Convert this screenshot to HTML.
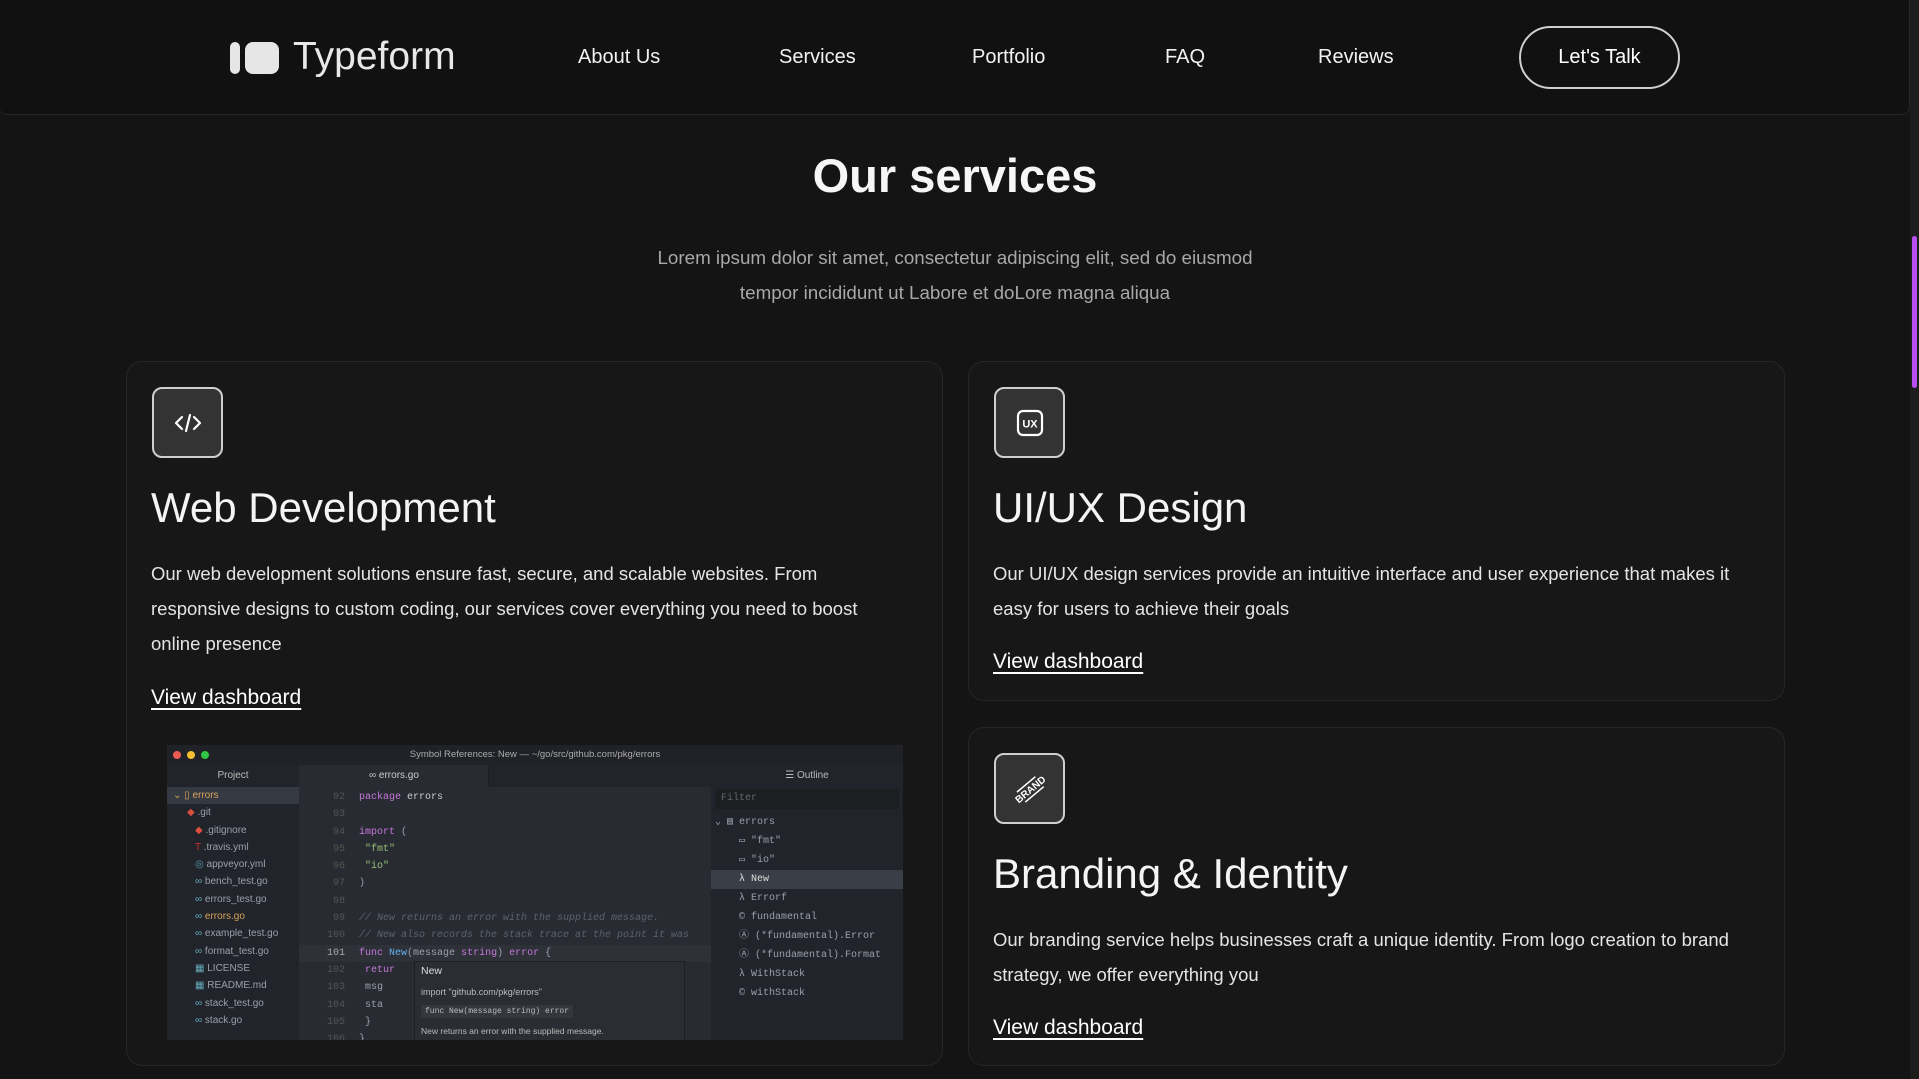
<!DOCTYPE html>
<html><head><meta charset="utf-8"><style>
*{margin:0;padding:0;box-sizing:border-box}
body{width:1919px;height:1079px;overflow:hidden;background:#141414;font-family:"Liberation Sans",sans-serif;color:#fff;position:relative}
.nav{position:absolute;left:0;top:0;width:1910px;height:115px;background:#111;border:1px solid #262626;border-top:none;border-left:none;border-radius:0 0 8px 8px}
.logo{position:absolute;left:230px;top:39px;display:flex;align-items:center}
.logo .a{width:10px;height:32px;background:#e6e6e6;border-radius:5px;margin-right:5px}
.logo .b{width:34px;height:32px;background:#e6e6e6;border-radius:8px}
.logo span{font-size:39px;color:#e8e8e8;margin-left:14px;letter-spacing:0px;line-height:39px;margin-top:-2px}
.nl{position:absolute;top:46px;font-size:20px;color:#f2f2f2}
.btn{position:absolute;left:1519px;top:26px;width:161px;height:63px;border:2px solid #cfcfcf;border-radius:32px;font-size:20px;text-align:center;line-height:59px;color:#fff}
.sb{position:absolute;left:1910px;top:0;width:9px;height:1079px;background:#1c1c1c}
.th{position:absolute;left:1912px;top:236px;width:5px;height:152px;background:#b84ff0;border-radius:3px}
h1{position:absolute;left:0;width:1910px;text-align:center;top:148px;font-size:47px;font-weight:bold;color:#f6f6f6}
.sub{position:absolute;left:0;width:1910px;text-align:center;top:240px;font-size:18.8px;line-height:35px;color:#a8a8a8}
.card{position:absolute;background:#171717;border:1px solid #262626;border-radius:16px}
.ic{position:absolute;left:25px;top:25px;width:71px;height:71px;background:#333;border:2px solid #cfcfcf;border-radius:10px;display:flex;align-items:center;justify-content:center}
.card h2{position:absolute;left:24px;top:122px;font-size:42px;font-weight:normal;color:#f4f4f4;white-space:nowrap}
.card p{position:absolute;left:24px;top:194px;font-size:18.5px;line-height:35px;color:#e4e4e4}
.card a{position:absolute;left:24px;font-size:21px;color:#fff;text-decoration:underline;text-underline-offset:4px}
.ed{position:absolute;left:40px;top:383px;width:736px;height:295px;background:#282b31;overflow:hidden;font-size:10px;color:#9aa0aa}
.tb{height:20px;background:#202227;text-align:center;line-height:20px;font-size:9.5px;color:#aaa;position:relative}
.dot{position:absolute;top:6px;width:8px;height:8px;border-radius:50%}
.pj{position:absolute;left:0;top:20px;width:132px;height:275px;background:#21242a}
.ol{position:absolute;left:544px;top:20px;width:192px;height:275px;background:#21242a}
.row{height:17.3px;line-height:17.3px;white-space:nowrap}
.mono{font-family:"Liberation Mono",monospace}
</style></head><body>
<div class="nav">
<div class="logo"><div class="a"></div><div class="b"></div><span>Typeform</span></div>
<div class="nl" style="left:578px">About Us</div>
<div class="nl" style="left:779px">Services</div>
<div class="nl" style="left:972px">Portfolio</div>
<div class="nl" style="left:1165px">FAQ</div>
<div class="nl" style="left:1318px">Reviews</div>
<div class="btn">Let's Talk</div>
</div>
<div class="sb"></div><div class="th"></div>
<h1>Our services</h1>
<div class="sub">Lorem ipsum dolor sit amet, consectetur adipiscing elit, sed do eiusmod<br>tempor incididunt ut Labore et doLore magna aliqua</div>

<div class="card" style="left:126px;top:361px;width:817px;height:705px">
<div class="ic"><svg width="30" height="24" viewBox="0 0 30 24" fill="none" stroke="#fff" stroke-width="2.2" stroke-linecap="round" stroke-linejoin="round"><path d="M9 6 3 12l6 6M21 6l6 6-6 6M17 4l-4 16"/></svg></div>
<h2>Web Development</h2>
<p>Our web development solutions ensure fast, secure, and scalable websites. From<br>responsive designs to custom coding, our services cover everything you need to boost<br>online presence</p>
<a style="top:324px">View dashboard</a>
<div class="ed">
<div class="tb"><div class="dot" style="left:6px;background:#ee5a52"></div><div class="dot" style="left:20px;background:#f3be30"></div><div class="dot" style="left:34px;background:#2ec742"></div>Symbol References: New — ~/go/src/github.com/pkg/errors</div>
<div class="pj">
<div style="height:22px;line-height:22px;text-align:center;color:#bbb">Project</div>
<div class="row" style="background:#353941;padding-left:6px;color:#d6a35a">⌄ ▯ errors</div>
<div class="row" style="padding-left:20px"><span style="color:#d94f3d">◆</span> .git</div>
<div class="row" style="padding-left:28px"><span style="color:#d94f3d">◆</span> .gitignore</div>
<div class="row" style="padding-left:28px"><span style="color:#c33">T</span> .travis.yml</div>
<div class="row" style="padding-left:28px"><span style="color:#59a">◎</span> appveyor.yml</div>
<div class="row" style="padding-left:28px"><span style="color:#6ab">∞</span> bench_test.go</div>
<div class="row" style="padding-left:28px"><span style="color:#6ab">∞</span> errors_test.go</div>
<div class="row" style="padding-left:28px;color:#d6a35a"><span style="color:#6ab">∞</span> errors.go</div>
<div class="row" style="padding-left:28px"><span style="color:#6ab">∞</span> example_test.go</div>
<div class="row" style="padding-left:28px"><span style="color:#6ab">∞</span> format_test.go</div>
<div class="row" style="padding-left:28px"><span style="color:#6ab">▦</span> LICENSE</div>
<div class="row" style="padding-left:28px"><span style="color:#6ab">▦</span> README.md</div>
<div class="row" style="padding-left:28px"><span style="color:#6ab">∞</span> stack_test.go</div>
<div class="row" style="padding-left:28px"><span style="color:#6ab">∞</span> stack.go</div>
</div>
<div style="position:absolute;left:132px;top:20px;width:190px;height:22px;background:#282b31;line-height:22px;padding-left:70px;color:#ccc;border-right:1px solid #1c1e22">∞ errors.go</div>
<div style="position:absolute;left:322px;top:20px;width:222px;height:22px;background:#21242a"></div>
<div class="mono" style="position:absolute;left:132px;top:44px;width:412px;font-size:10px">
<div class="row"><span style="display:inline-block;width:46px;text-align:right;color:#555;margin-right:14px">92</span><span style="color:#c678dd">package</span> <span style="color:#ccc">errors</span></div>
<div class="row"><span style="display:inline-block;width:46px;text-align:right;color:#555;margin-right:14px">93</span></div>
<div class="row"><span style="display:inline-block;width:46px;text-align:right;color:#555;margin-right:14px">94</span><span style="color:#c678dd">import</span> (</div>
<div class="row"><span style="display:inline-block;width:46px;text-align:right;color:#555;margin-right:14px">95</span>  <span style="color:#98c379">"fmt"</span></div>
<div class="row"><span style="display:inline-block;width:46px;text-align:right;color:#555;margin-right:14px">96</span>  <span style="color:#98c379">"io"</span></div>
<div class="row"><span style="display:inline-block;width:46px;text-align:right;color:#555;margin-right:14px">97</span>)</div>
<div class="row"><span style="display:inline-block;width:46px;text-align:right;color:#555;margin-right:14px">98</span></div>
<div class="row" style="color:#5c6370;font-style:italic"><span style="display:inline-block;width:46px;text-align:right;color:#555;margin-right:14px;font-style:normal">99</span>// New returns an error with the supplied message.</div>
<div class="row" style="color:#5c6370;font-style:italic"><span style="display:inline-block;width:46px;text-align:right;color:#555;margin-right:14px;font-style:normal">100</span>// New also records the stack trace at the point it was</div>
<div class="row" style="background:#2e3138"><span style="display:inline-block;width:46px;text-align:right;color:#aaa;margin-right:14px">101</span><span style="color:#c678dd">func</span> <span style="color:#61afef">New</span>(message <span style="color:#c678dd">string</span>) <span style="color:#c678dd">error</span> {</div>
<div class="row"><span style="display:inline-block;width:46px;text-align:right;color:#555;margin-right:14px">102</span>  <span style="color:#c678dd">retur</span></div>
<div class="row"><span style="display:inline-block;width:46px;text-align:right;color:#555;margin-right:14px">103</span>    msg</div>
<div class="row"><span style="display:inline-block;width:46px;text-align:right;color:#555;margin-right:14px">104</span>    sta</div>
<div class="row"><span style="display:inline-block;width:46px;text-align:right;color:#555;margin-right:14px">105</span>  }</div>
<div class="row"><span style="display:inline-block;width:46px;text-align:right;color:#555;margin-right:14px">106</span>}</div>
</div>
<div style="position:absolute;left:247px;top:216px;width:271px;height:85px;background:#2a2d33;border:1px solid #1d1f23;color:#bbb;font-size:9px;padding:3px 6px">
<div style="font-size:10.5px;color:#ddd">New</div>
<div style="margin-top:10px">import "github.com/pkg/errors"</div>
<div class="mono" style="margin-top:8px;background:#34373e;display:inline-block;padding:2px 4px;font-size:8px">func New(message string) error</div>
<div style="margin-top:8px;font-size:8.5px">New returns an error with the supplied message.</div>
</div>
<div class="ol">
<div style="height:22px;line-height:22px;text-align:center;color:#bbb">☰ Outline</div>
<div style="margin:2px 4px;height:20px;background:#1c1e22;line-height:20px;padding-left:6px;color:#666" class="mono">Filter</div>
<div class="mono" style="margin-top:4px;font-size:10px">
<div style="height:19px;line-height:19px;padding-left:4px">⌄ ▤ errors</div>
<div style="height:19px;line-height:19px;padding-left:28px">▭ "fmt"</div>
<div style="height:19px;line-height:19px;padding-left:28px">▭ "io"</div>
<div style="height:19px;line-height:19px;padding-left:28px;background:#3a3e46;color:#ddd">λ New</div>
<div style="height:19px;line-height:19px;padding-left:28px">λ Errorf</div>
<div style="height:19px;line-height:19px;padding-left:28px">© fundamental</div>
<div style="height:19px;line-height:19px;padding-left:28px">Ⓐ (*fundamental).Error</div>
<div style="height:19px;line-height:19px;padding-left:28px">Ⓐ (*fundamental).Format</div>
<div style="height:19px;line-height:19px;padding-left:28px">λ WithStack</div>
<div style="height:19px;line-height:19px;padding-left:28px">© withStack</div>
</div></div>
</div>
</div>

<div class="card" style="left:968px;top:361px;width:817px;height:340px">
<div class="ic"><svg width="30" height="30" viewBox="0 0 30 30" fill="none"><rect x="3" y="3" width="24" height="24" rx="5" stroke="#fff" stroke-width="2.2"/><text x="15" y="19.5" text-anchor="middle" font-family="Liberation Sans" font-weight="bold" font-size="11" fill="#fff">UX</text></svg></div>
<h2>UI/UX Design</h2>
<p>Our UI/UX design services provide an intuitive interface and user experience that makes it<br>easy for users to achieve their goals</p>
<a style="top:288px">View dashboard</a>
</div>

<div class="card" style="left:968px;top:727px;width:817px;height:339px">
<div class="ic"><svg width="34" height="34" viewBox="0 0 34 34"><g transform="rotate(-40 17 17)"><text x="17" y="21" text-anchor="middle" font-family="Liberation Sans" font-weight="bold" font-size="10" fill="#fff">BRAND</text><line x1="5" y1="11" x2="29" y2="11" stroke="#fff" stroke-width="1.5"/><line x1="5" y1="24" x2="29" y2="24" stroke="#fff" stroke-width="1.5"/></g></svg></div>
<h2>Branding &amp; Identity</h2>
<p>Our branding service helps businesses craft a unique identity. From logo creation to brand<br>strategy, we offer everything you</p>
<a style="top:288px">View dashboard</a>
</div>
</body></html>
